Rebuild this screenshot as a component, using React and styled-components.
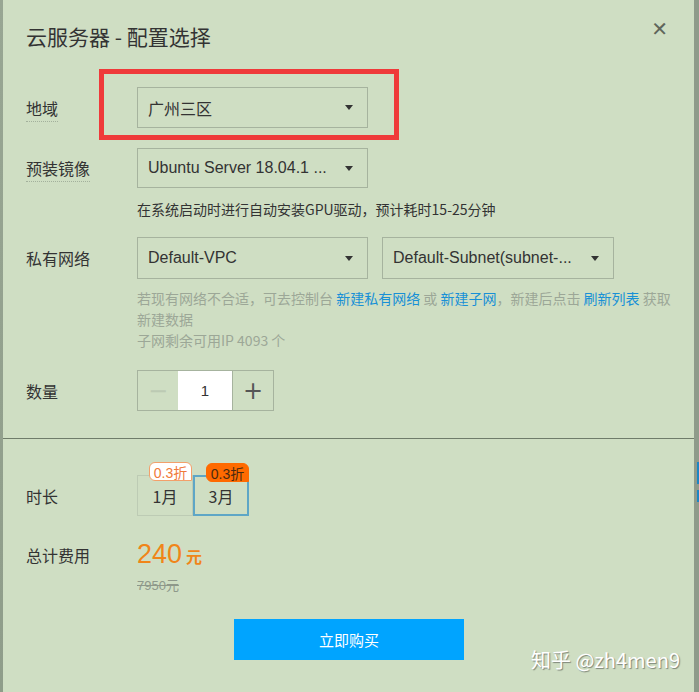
import React, { useState } from 'react';
import styled, { createGlobalStyle } from 'styled-components';

const GlobalStyle = createGlobalStyle`
  html, body {
    margin: 0;
    padding: 0;
    background: #cfdec3;
  }
  body {
    font-family: "Liberation Sans", "Noto Sans CJK SC", sans-serif;
    color: #333;
  }
`;

const Page = styled.div`
  display: flex;
  width: 699px;
  height: 692px;
  overflow: hidden;
  position: relative;
`;

const EdgeLeft = styled.div`
  width: 3px;
  background: linear-gradient(#98a693, #8f9d8a);
  flex-shrink: 0;
`;

const EdgeRight = styled.div`
  width: 5px;
  flex-shrink: 0;
  background: #8f9b8a;
  position: relative;
`;

const BlueBit = styled.div`
  position: absolute;
  left: 3px;
  top: ${(p) => p.top}px;
  width: 2px;
  height: ${(p) => p.h}px;
  background: #1b86c4;
`;

const Dialog = styled.div`
  flex: 1;
  display: flex;
  flex-direction: column;
  background: #cfdec3;
  position: relative;
`;

const Header = styled.div`
  display: flex;
  justify-content: space-between;
  align-items: center;
  padding: 22px 26px 0 23px;
  height: 28px;
`;

const Title = styled.h1`
  margin: 0;
  font-size: 21px;
  font-weight: normal;
  line-height: 28px;
  color: #333;
  font-family: "Noto Sans CJK SC", sans-serif;
`;

const Close = styled.span`
  font-size: 20px;
  color: #5f665b;
  font-family: "DejaVu Sans", sans-serif;
  line-height: 1;
  margin-top: -14px;
`;

const Section = styled.div`
  display: flex;
  flex-direction: column;
  padding: 0 0 0 23px;
`;

const Row = styled.div`
  display: flex;
  align-items: center;
  margin-top: ${(p) => p.mt || 0}px;
`;

const Label = styled.div`
  width: 111px;
  flex-shrink: 0;
  font-size: 16px;
  color: #333;
  font-family: "Noto Sans CJK SC", sans-serif;
  span {
    border-bottom: ${(p) => (p.dotted ? '1px dotted #a3b09c' : 'none')};
    padding-bottom: 1px;
  }
`;

const Controls = styled.div`
  display: flex;
  gap: 14px;
`;

const SelectBox = styled.div`
  width: ${(p) => p.w || 231}px;
  height: ${(p) => p.h || 41}px;
  box-sizing: border-box;
  border: 1px solid #a6b39e;
  display: flex;
  align-items: center;
  justify-content: space-between;
  padding: 0 14px 0 10px;
  font-size: 16px;
  color: #333;
  font-family: "Liberation Sans", "Noto Sans CJK SC", sans-serif;
`;

const Caret = styled.span`
  width: 0;
  height: 0;
  border-left: 4px solid transparent;
  border-right: 4px solid transparent;
  border-top: 5px solid #333;
`;

const Hint = styled.div`
  margin-left: 111px;
  margin-top: ${(p) => p.mt || 0}px;
  font-size: 14px;
  line-height: ${(p) => p.lh || 22}px;
  color: ${(p) => (p.muted ? '#9ca797' : '#333')};
  max-width: 540px;
  font-family: "Noto Sans CJK SC", sans-serif;
`;

const Link = styled.a`
  color: #1890d6;
  text-decoration: none;
`;

const Stepper = styled.div`
  display: flex;
  height: 41px;
  box-sizing: border-box;
  border: 1px solid #a6b39e;
`;

const StepBtn = styled.div`
  width: 40px;
  display: flex;
  align-items: center;
  justify-content: center;
  font-size: 24px;
  color: ${(p) => (p.disabled ? '#bccab3' : '#555')};
  font-family: "DejaVu Sans", sans-serif;
  border-left: ${(p) => (p.divide ? '1px solid #a6b39e' : 'none')};
`;

const StepValue = styled.div`
  width: 54px;
  background: #fff;
  display: flex;
  align-items: center;
  justify-content: center;
  font-size: 15px;
  color: #333;
`;

const Divider = styled.div`
  height: 1px;
  background: #6f7c6a;
  margin-top: 27px;
  margin-left: -23px;
`;

const Periods = styled.div`
  display: flex;
`;

const Period = styled.div`
  position: relative;
  width: 56px;
  height: 41px;
  box-sizing: border-box;
  border: ${(p) => (p.active ? '2px solid #5ea6c6' : '1px solid #bdcbb4')};
  display: flex;
  align-items: center;
  justify-content: center;
  font-size: 16px;
  color: #333;
  font-family: "Noto Sans CJK SC", sans-serif;
`;

const Badge = styled.span`
  position: absolute;
  top: -14px;
  right: ${(p) => (p.active ? -2 : 0)}px;
  width: 43px;
  height: 19px;
  box-sizing: border-box;
  display: flex;
  align-items: center;
  justify-content: center;
  font-size: 14px;
  border-radius: 6px 6px 0 6px;
  font-family: "Liberation Sans", "Noto Sans CJK SC", sans-serif;
  background: ${(p) => (p.active ? '#ff6a00' : '#fff')};
  color: ${(p) => (p.active ? '#4a2a10' : '#f07a3a')};
  border: 1px solid ${(p) => (p.active ? '#ff6a00' : '#f3a06a')};
`;

const Price = styled.div`
  font-size: 27px;
  line-height: 26px;
  color: #f08519;
  display: flex;
  align-items: baseline;
  gap: 4px;
  small {
    font-size: 16px;
    font-weight: bold;
    font-family: "Noto Sans CJK SC", sans-serif;
  }
`;

const OldPrice = styled.div`
  margin-left: 111px;
  margin-top: 8px;
  font-size: 13px;
  line-height: 18px;
  color: #8e988a;
  text-decoration: line-through;
  font-family: "Liberation Sans", "Noto Sans CJK SC", sans-serif;
`;

const BuyButton = styled.button`
  align-self: flex-start;
  margin: 24px 0 0 208px;
  width: 230px;
  height: 41px;
  border: none;
  background: #00a4ff;
  color: #fff;
  font-size: 15px;
  font-family: "Noto Sans CJK SC", sans-serif;
  cursor: pointer;
`;

const RedFrame = styled.div`
  position: absolute;
  left: 96px;
  top: 69px;
  width: 300px;
  height: 71px;
  box-sizing: border-box;
  border: 5px solid #ef3a3a;
  pointer-events: none;
`;

const Watermark = styled.div`
  position: absolute;
  right: 14px;
  bottom: 18px;
  font-size: 20px;
  color: #fff;
  text-shadow: 1px 1px 1px #7c8578;
  font-family: "Noto Sans CJK SC", sans-serif;
`;

export default function App() {
  const [count] = useState(1);
  const [period, setPeriod] = useState('3月');

  return (
    <Page>
      <GlobalStyle />
      <EdgeLeft />
      <Dialog>
        <Header>
          <Title>云服务器 - 配置选择</Title>
          <Close>✕</Close>
        </Header>
        <Section>
          <Row mt={37}>
            <Label dotted><span>地域</span></Label>
            <SelectBox>广州三区<Caret /></SelectBox>
          </Row>
          <Row mt={20}>
            <Label dotted><span>预装镜像</span></Label>
            <SelectBox h={40}>Ubuntu Server 18.04.1 ...<Caret /></SelectBox>
          </Row>
          <Hint mt={10}>在系统启动时进行自动安装GPU驱动，预计耗时15-25分钟</Hint>
          <Row mt={17}>
            <Label>私有网络</Label>
            <Controls>
              <SelectBox h={42}>Default-VPC<Caret /></SelectBox>
              <SelectBox h={42} w={232}>Default-Subnet(subnet-...<Caret /></SelectBox>
            </Controls>
          </Row>
          <Hint mt={9} lh={21} muted>
            若现有网络不合适，可去控制台 <Link>新建私有网络</Link> 或 <Link>新建子网</Link>，新建后点击 <Link>刷新列表</Link> 获取新建数据
            <br />
            子网剩余可用IP 4093 个
          </Hint>
          <Row mt={19}>
            <Label>数量</Label>
            <Stepper>
              <StepBtn disabled>−</StepBtn>
              <StepValue>{count}</StepValue>
              <StepBtn divide>+</StepBtn>
            </Stepper>
          </Row>
          <Divider />
          <Row mt={36}>
            <Label>时长</Label>
            <Periods>
              {['1月', '3月'].map((p) => (
                <Period key={p} active={period === p} onClick={() => setPeriod(p)}>
                  <Badge active={period === p}>0.3折</Badge>
                  {p}
                </Period>
              ))}
            </Periods>
          </Row>
          <Row mt={25}>
            <Label>总计费用</Label>
            <Price>240<small>元</small></Price>
          </Row>
          <OldPrice>7950元</OldPrice>
          <BuyButton>立即购买</BuyButton>
        </Section>
        <RedFrame />
        <Watermark>知乎 @zh4men9</Watermark>
      </Dialog>
      <EdgeRight>
        <BlueBit top={462} h={22} />
        <BlueBit top={490} h={12} />
      </EdgeRight>
    </Page>
  );
}
